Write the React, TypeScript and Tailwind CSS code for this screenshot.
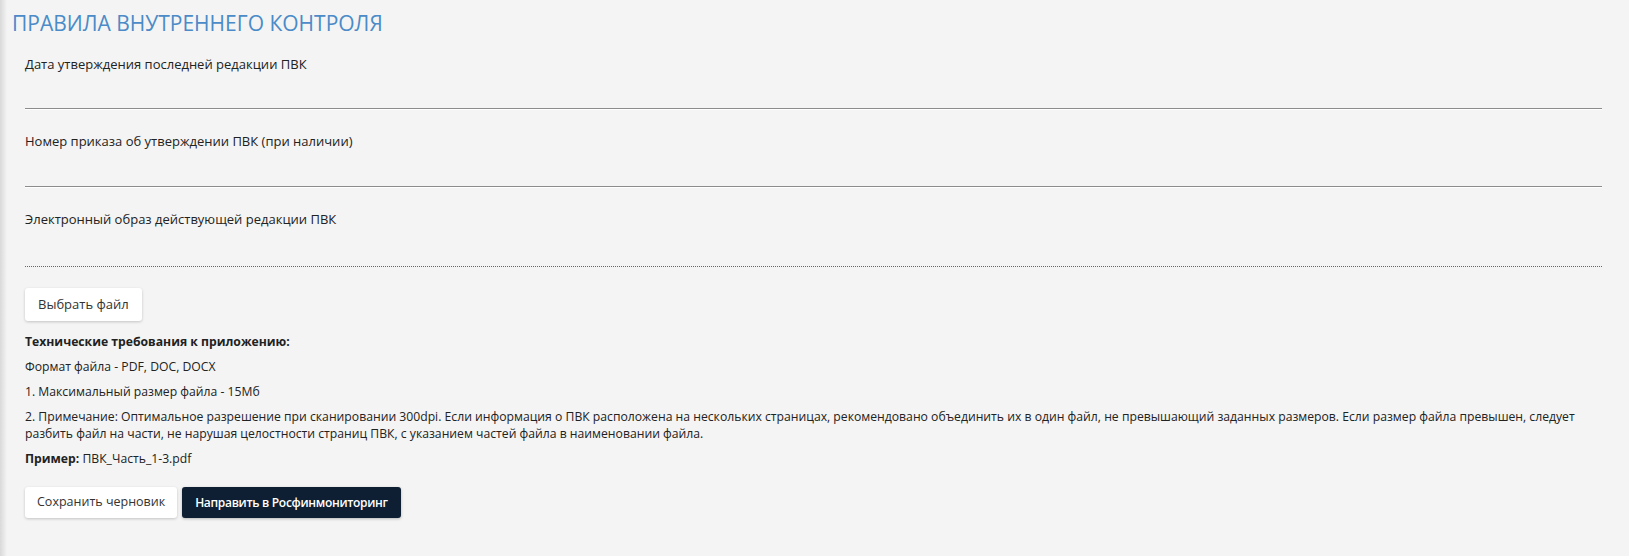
export default function App() {
  const font = { fontFamily: '"Open Sans", "Noto Sans", sans-serif' };
  return (
    <div className="flex min-h-[556px] w-full bg-[#f4f4f4] text-[#222]" style={font}>
      <div className="w-[7px] shrink-0 bg-gradient-to-r from-[#d9d9d9] to-[#f4f4f4]" />
      <div className="flex-1 pr-[27px]">
        <h1 className="pl-[5px] pt-[9px] text-[21px] leading-[28px] text-[#4a8bc8]">
          ПРАВИЛА ВНУТРЕННЕГО КОНТРОЛЯ
        </h1>

        <div className="pl-[18px]">
          <label className="mt-[18px] block text-[13px] leading-[18px]">
            Дата утверждения последней редакции ПВК
          </label>
          <div className="mt-[34px] h-[2px] border-b border-[#8c8c8c] shadow-[0_1px_0_#fff]" />

          <label className="mt-[23px] block text-[13px] leading-[18px]">
            Номер приказа об утверждении ПВК (при наличии)
          </label>
          <div className="mt-[35px] h-[2px] border-b border-[#8c8c8c] shadow-[0_1px_0_#fff]" />

          <label className="mt-[23px] block text-[13px] leading-[18px]">
            Электронный образ действующей редакции ПВК
          </label>
          <div className="mt-[38px] border-b border-dotted border-[#666]" />

          <button className="mt-[21px] h-[33px] rounded-[3px] bg-white px-[13px] text-[13px] text-[#333] shadow-[0_1px_3px_rgba(0,0,0,0.2)]">
            Выбрать файл
          </button>

          <div className="mt-[12px] flex flex-col gap-[8px] text-[12.2px] leading-[17px]">
            <p className="font-bold">Технические требования к приложению:</p>
            <p>Формат файла - PDF, DOC, DOCX</p>
            <p>1. Максимальный размер файла - 15Мб</p>
            <p>
              2. Примечание: Оптимальное разрешение при сканировании 300dpi. Если информация о ПВК расположена на
              нескольких страницах, рекомендовано объединить их в один файл, не превышающий заданных размеров. Если
              размер файла превышен, следует разбить файл на части, не нарушая целостности страниц ПВК, с указанием
              частей файла в наименовании файла.
            </p>
            <p>
              <span className="font-bold">Пример:</span> ПВК_Часть_1-3.pdf
            </p>
          </div>

          <div className="mt-[20px] flex gap-[5px]">
            <button className="h-[31px] rounded-[3px] bg-white px-[12px] text-[12.5px] text-[#333] shadow-[0_1px_3px_rgba(0,0,0,0.2)]">
              Сохранить черновик
            </button>
            <button className="h-[31px] rounded-[3px] bg-[#0f1f33] px-[13px] text-[12px] font-semibold tracking-[-0.3px] text-white shadow-[0_1px_3px_rgba(0,0,0,0.25)]">
              Направить в Росфинмониторинг
            </button>
          </div>
        </div>
      </div>
    </div>
  );
}
